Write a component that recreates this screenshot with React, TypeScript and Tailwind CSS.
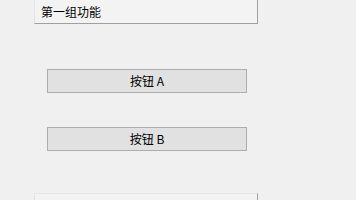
export default function App() {
  const font = { fontFamily: '"Noto Sans CJK SC", "Liberation Sans", sans-serif' };
  return (
    <div className="w-[356px] h-[200px] bg-[#f0f0f0] overflow-hidden relative text-[12px] text-black" style={font}>
      <div className="ml-[34px] w-[224px] h-[24px] bg-[#f3f3f3] border-r border-b border-[#a0a0a0] border-l border-l-[#e3e3e3] flex items-center pl-[6px] leading-none">
        第一组功能
      </div>
      <div className="mt-[45px] ml-[47px] w-[200px] h-[24px] bg-[#e1e1e1] border border-[#adadad] flex items-center justify-center leading-none">
        按钮 A
      </div>
      <div className="mt-[34px] ml-[47px] w-[200px] h-[24px] bg-[#e1e1e1] border border-[#adadad] flex items-center justify-center leading-none">
        按钮 B
      </div>
      <div className="mt-[42px] ml-[34px] w-[224px] h-[20px] bg-[#f3f3f3] border-t border-t-[#e6e6e6] border-r border-[#a0a0a0] border-l border-l-[#e3e3e3]"></div>
    </div>
  );
}
